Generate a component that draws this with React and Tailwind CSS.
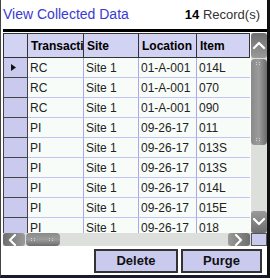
import React from "react";

const rows = [
  ["RC", "Site 1", "01-A-001", "014L"],
  ["RC", "Site 1", "01-A-001", "070"],
  ["RC", "Site 1", "01-A-001", "090"],
  ["PI", "Site 1", "09-26-17", "011"],
  ["PI", "Site 1", "09-26-17", "013S"],
  ["PI", "Site 1", "09-26-17", "013S"],
  ["PI", "Site 1", "09-26-17", "014L"],
  ["PI", "Site 1", "09-26-17", "015E"],
  ["PI", "Site 1", "09-26-17", "018"],
];

const cols = ["w-[56px]", "w-[55px]", "w-[58px]", "w-[54px]"];

function Grip() {
  return (
    <svg width="6" height="4" viewBox="0 0 6 4">
      <rect x="0" y="0" width="1" height="1" fill="#cfcfcf" />
      <rect x="3" y="0" width="1" height="1" fill="#cfcfcf" />
      <rect x="0" y="2" width="1" height="1" fill="#cfcfcf" />
      <rect x="3" y="2" width="1" height="1" fill="#cfcfcf" />
    </svg>
  );
}

function Chevron({ dir }) {
  const d = {
    up: "M2 8 L7 3 L12 8",
    down: "M2 3 L7 8 L12 3",
    left: "M8 1 L3 6 L8 11",
    right: "M4 1 L9 6 L4 11",
  }[dir];
  return (
    <svg width="14" height="12" viewBox="0 0 14 12">
      <path d={d} stroke="#ffffff" strokeWidth="2.2" fill="none" strokeLinecap="round" strokeLinejoin="round" />
    </svg>
  );
}

export default function App() {
  return (
    <div
      className="w-[270px] h-[278px] bg-white border-l border-l-[#444] border-r-[3px] border-r-[#111] border-b-[3px] border-b-[#1a1a2a] flex flex-col overflow-hidden"
      style={{ fontFamily: '"Liberation Sans", Arial, sans-serif' }}
    >
      {/* title bar */}
      <div className="h-[29px] flex items-center justify-between pl-[2px] pr-[7px] shrink-0">
        <span className="text-[14px] text-[#3a3ad4]">View Collected Data</span>
        <span className="text-[13px] text-[#333]">
          <span className="font-bold text-black">14</span> Record(s)
        </span>
      </div>
      <div className="h-[3px] bg-black ml-[2px] shrink-0" />

      {/* grid */}
      <div className="mt-[1px] ml-[2px] h-[213px] flex flex-col shrink-0">
        <div className="flex h-[200px]">
          <div className="w-[248px] flex flex-col bg-[#f8fcf8] overflow-hidden">
            {/* header */}
            <div className="flex h-[25px] shrink-0 bg-[#d2d2f2] border border-[#333] text-[12px] font-bold text-black">
              <div className="w-[24px] border-r border-[#333] shrink-0" />
              {["Transaction", "Site", "Location", "Item"].map((h, i) => (
                <div
                  key={h}
                  className={`${cols[i]} shrink-0 overflow-hidden whitespace-nowrap flex items-center px-[3px] ${i < 3 ? "border-r border-[#333]" : ""}`}
                >
                  {h}
                </div>
              ))}
            </div>
            {rows.map((r, ri) => (
              <div key={ri} className="flex h-[20px] shrink-0 text-[12px] text-[#222]">
                <div className="w-[25px] shrink-0 bg-[#cacaee] border-l border-b border-r border-[#444] flex items-center pl-[7px]">
                  {ri === 0 && (
                    <svg width="5" height="7" viewBox="0 0 5 7">
                      <path d="M0 0 L5 3.5 L0 7 Z" fill="#111" />
                    </svg>
                  )}
                </div>
                {r.map((c, ci) => (
                  <div
                    key={ci}
                    className={`${cols[ci]} shrink-0 flex items-center px-[2px] border-b border-[#c4c4f4] ${ci < 3 ? "border-r border-r-[#a8a8ec]" : ""}`}
                  >
                    {c}
                  </div>
                ))}
              </div>
            ))}
          </div>
          {/* vertical scrollbar */}
          <div className="w-[16px] flex flex-col bg-[#dcdfdc] ml-[1px]">
            <div className="h-[25px] rounded-[3px] bg-gradient-to-b from-[#6e6e6e] to-[#9a9a9a] flex items-center justify-center">
              <Chevron dir="up" />
            </div>
            <div className="h-[86px] mt-[1px] rounded-[4px] bg-gradient-to-r from-[#8a8a8a] via-[#9c9c9c] to-[#6c6c6c] flex flex-col items-center justify-between py-[3px]">
              <Grip />
              <Grip />
            </div>
            <div className="flex-1" />
            <div className="h-[22px] rounded-[3px] bg-gradient-to-b from-[#9a9a9a] to-[#6e6e6e] flex items-center justify-center">
              <Chevron dir="down" />
            </div>
          </div>
        </div>
        {/* horizontal scrollbar */}
        <div className="flex h-[13px] bg-[#dcdfdc]">
          <div className="w-[22px] rounded-[3px] bg-gradient-to-r from-[#6e6e6e] to-[#9a9a9a] flex items-center justify-center">
            <Chevron dir="left" />
          </div>
          <div className="w-[34px] ml-[1px] rounded-[4px] bg-gradient-to-b from-[#8a8a8a] via-[#9c9c9c] to-[#6c6c6c] flex items-center justify-between px-[5px]">
            <Grip />
            <Grip />
          </div>
          <div className="flex-1" />
          <div className="w-[22px] rounded-[3px] bg-gradient-to-r from-[#9a9a9a] to-[#6e6e6e] flex items-center justify-center">
            <Chevron dir="right" />
          </div>
          <div className="w-[16px] ml-[1px] bg-[#cacaee] border border-[#555]" />
        </div>
      </div>

      {/* buttons */}
      <div className="flex justify-end gap-[3px] pr-[5px] mt-[3px]">
        <button className="w-[84px] h-[24px] bg-[#cacaee] border-2 border-[#333] text-[13px] font-bold text-[#111]">
          Delete
        </button>
        <button className="w-[81px] h-[24px] bg-[#cacaee] border-2 border-[#333] text-[13px] font-bold text-[#111]">
          Purge
        </button>
      </div>
    </div>
  );
}
